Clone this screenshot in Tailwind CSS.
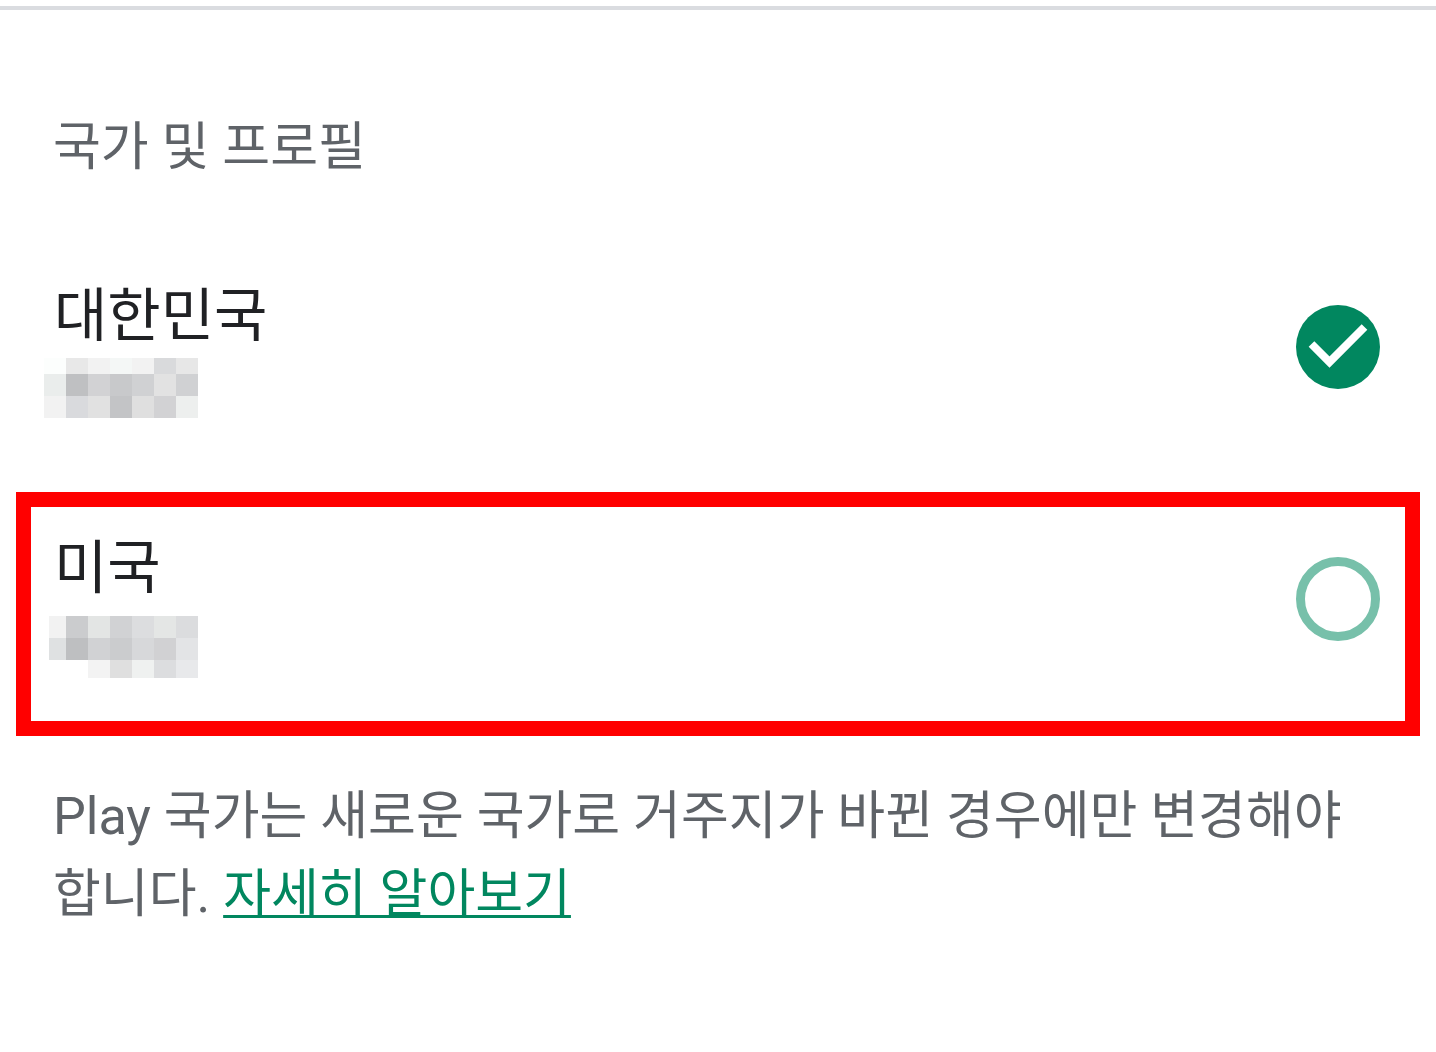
<!DOCTYPE html>
<html lang="ko">
<head>
<meta charset="utf-8">
<meta name="viewport" content="width=device-width, initial-scale=1">
<title>국가 및 프로필</title>
<script src="https://cdn.jsdelivr.net/npm/@tailwindcss/browser@4"></script>
</head>
<body class="bg-white font-['Roboto','Noto_Sans_CJK_KR',sans-serif] text-[#5f6368]">
<main class="pt-[6px]">
  <hr class="h-1 border-0 bg-[#dadce0]">
  <fieldset class="mt-[102px]">
    <legend class="px-[53px] text-[52px] leading-[72px]">국가 및 프로필</legend>

    <label class="mt-24 flex items-start justify-between pr-14 pl-11">
      <span class="flex flex-col">
        <span class="pl-[10px] text-[58px] leading-[72px] text-[#202124]">대한민국</span>
        <!-- redacted profile name -->
        <span class="mt-[6px] grid w-[154px] grid-cols-7 grid-rows-[16px_22px_22px]">
          <i class="bg-[#fcfefd]"></i><i class="bg-[#e8e8e8]"></i><i class="bg-[#f2f2f2]"></i><i class="bg-[#f4f7f6]"></i><i class="bg-[#f2f2f2]"></i><i class="bg-[#d9dadc]"></i><i class="bg-[#e7e7e7]"></i>
          <i class="bg-[#eaedec]"></i><i class="bg-[#bfc0c2]"></i><i class="bg-[#d2d2d4]"></i><i class="bg-[#c8c9cb]"></i><i class="bg-[#d0d1d3]"></i><i class="bg-[#e2e2e2]"></i><i class="bg-[#d0d1d3]"></i>
          <i class="bg-[#f2f2f2]"></i><i class="bg-[#d9dadd]"></i><i class="bg-[#e1e1e1]"></i><i class="bg-[#c3c4c6]"></i><i class="bg-[#dfdfdf]"></i><i class="bg-[#d2d2d4]"></i><i class="bg-[#edefee]"></i>
        </span>
      </span>
      <span class="mt-[25px] grid size-[84px] place-items-center">
        <input type="radio" name="country" checked class="col-start-1 row-start-1 size-[84px] appearance-none rounded-full bg-[#01875f]">
        <svg class="pointer-events-none col-start-1 row-start-1 size-[84px]" viewBox="0 0 84 84" fill="none" stroke="#fff" stroke-width="8" aria-hidden="true"><path d="M15.500 39 33.500 57 68.500 22"/></svg>
      </span>
    </label>

    <label class="mx-4 mt-[74px] flex items-start justify-between border-[15px] border-[#ff0000] pt-[25px] pr-[25px] pb-[43px] pl-[13px]">
      <span class="flex flex-col">
        <span class="pl-[10px] text-[58px] leading-[72px] text-[#202124]">미국</span>
        <!-- redacted profile name -->
        <span class="mt-3 ml-[5px] grid grid-cols-[17px_repeat(6,22px)] grid-rows-[22px_22px_18px]">
          <i class="bg-[#f2f2f2]"></i><i class="bg-[#cbccce]"></i><i class="bg-[#e3e5e4]"></i><i class="bg-[#d1d2d4]"></i><i class="bg-[#dcdddf]"></i><i class="bg-[#e4e6e5]"></i><i class="bg-[#dbdcde]"></i>
          <i class="bg-[#dfe1e2]"></i><i class="bg-[#bebfc1]"></i><i class="bg-[#d1d2d4]"></i><i class="bg-[#cbccce]"></i><i class="bg-[#d7d8da]"></i><i class="bg-[#d1d1d3]"></i><i class="bg-[#e3e4e6]"></i>
          <i></i><i></i><i class="bg-[#f3f3f3]"></i><i class="bg-[#dfdfdf]"></i><i class="bg-[#eff1f0]"></i><i class="bg-[#dcdddf]"></i><i class="bg-[#e8e9eb]"></i>
        </span>
      </span>
      <input type="radio" name="country" class="mt-[25px] size-[84px] appearance-none rounded-full border-[9px] border-[#77c0aa]">
    </label>
  </fieldset>

  <p class="mt-[42px] px-[53px] pb-24 text-[52px] leading-[78px] break-keep">Play 국가는 새로운 국가로 거주지가 바뀐 경우에만 변경해야 합니다. <a href="#" class="text-[#01875f] underline decoration-[3px] underline-offset-[3px] [text-decoration-skip-ink:none]">자세히 알아보기</a></p>
</main>
</body>
</html>
